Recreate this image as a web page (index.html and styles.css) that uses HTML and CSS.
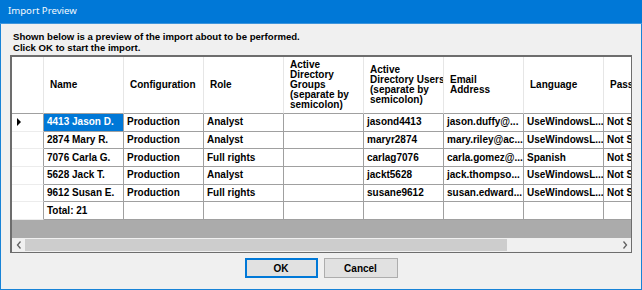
FILE: index.html
```html
<!DOCTYPE html>
<html>
<head>
<meta charset="utf-8">
<title>Import Preview</title>
<link rel="stylesheet" href="styles.css">
</head>
<body>
<div class="window">
  <div class="titlebar"><span class="title">Import Preview</span></div>
  <div class="content">
    <p class="intro">Shown below is a preview of the import about to be performed.<br>Click OK to start the import.</p>
    <div class="grid">
      <div class="grid-viewport">
        <table class="table">
          <colgroup>
            <col class="c-rowhead"><col class="c-col"><col class="c-col"><col class="c-col"><col class="c-col"><col class="c-col"><col class="c-col"><col class="c-col"><col class="c-col">
          </colgroup>
          <thead>
            <tr>
              <th class="rowhead"></th>
              <th>Name</th>
              <th>Configuration</th>
              <th>Role</th>
              <th>Active<br>Directory<br>Groups<br>(separate by<br>semicolon)</th>
              <th>Active<br>Directory Users<br>(separate by<br>semicolon)</th>
              <th>Email<br>Address</th>
              <th>Language</th>
              <th>Password</th>
            </tr>
          </thead>
          <tbody>
            <tr>
              <td class="rowhead"><svg class="current" width="5" height="8" viewBox="0 0 5 8"><path d="M0 0 L4 4 L0 8 Z" fill="#000"/></svg></td>
              <td class="selected">4413 Jason D.</td><td>Production</td><td>Analyst</td><td></td><td>jasond4413</td><td>jason.duffy@...</td><td>UseWindowsL...</td><td>Not Set</td>
            </tr>
            <tr>
              <td class="rowhead"></td>
              <td>2874 Mary R.</td><td>Production</td><td>Analyst</td><td></td><td>maryr2874</td><td>mary.riley@ac...</td><td>UseWindowsL...</td><td>Not Set</td>
            </tr>
            <tr>
              <td class="rowhead"></td>
              <td>7076 Carla G.</td><td>Production</td><td>Full rights</td><td></td><td>carlag7076</td><td>carla.gomez@...</td><td>Spanish</td><td>Not Set</td>
            </tr>
            <tr>
              <td class="rowhead"></td>
              <td>5628 Jack T.</td><td>Production</td><td>Analyst</td><td></td><td>jackt5628</td><td>jack.thompso...</td><td>UseWindowsL...</td><td>Not Set</td>
            </tr>
            <tr>
              <td class="rowhead"></td>
              <td>9612 Susan E.</td><td>Production</td><td>Full rights</td><td></td><td>susane9612</td><td>susan.edward...</td><td>UseWindowsL...</td><td>Not Set</td>
            </tr>
            <tr>
              <td class="rowhead"></td>
              <td>Total: 21</td><td></td><td></td><td></td><td></td><td></td><td></td><td></td>
            </tr>
          </tbody>
        </table>
        <div class="empty-area"></div>
      </div>
      <div class="hscroll">
        <div class="arrow"><svg width="6" height="8" viewBox="0 0 6 8"><path d="M4.5 0.5 L1.5 4 L4.5 7.5" fill="none" stroke="#606060" stroke-width="1.3"/></svg></div>
        <div class="track"><div class="thumb"></div></div>
        <div class="arrow"><svg width="6" height="8" viewBox="0 0 6 8"><path d="M1.5 0.5 L4.5 4 L1.5 7.5" fill="none" stroke="#606060" stroke-width="1.3"/></svg></div>
      </div>
    </div>
    <div class="buttons">
      <button class="btn btn-default">OK</button>
      <button class="btn btn-cancel">Cancel</button>
    </div>
  </div>
</div>
</body>
</html>
```
FILE: styles.css
```css
* { box-sizing: border-box; }
html, body {
  margin: 0;
  padding: 0;
  width: 642px;
  height: 290px;
  overflow: hidden;
  background: #f0f0f0;
}
.window {
  width: 642px;
  height: 290px;
  display: flex;
  flex-direction: column;
  border: 1px solid #1883d7;
  border-top: none;
  background: #f0f0f0;
}
.titlebar {
  height: 24px;
  flex: none;
  background: #0078d7;
  border-bottom: 1px solid #3e95dc;
  display: flex;
  align-items: center;
  padding-left: 8px;
  margin: 0 -1px;
}
.title {
  font-family: "Noto Sans", "Open Sans", sans-serif;
  font-size: 9.6px;
  color: #f4f9fd;
  line-height: 14px;
  position: relative;
  top: -1px;
}
.content {
  flex: 1;
  display: flex;
  flex-direction: column;
  padding: 7px 9px 0 9px;
  font-family: "Liberation Sans", Arial, sans-serif;
  font-weight: bold;
  font-size: 10px;
  color: #000;
}
.intro {
  margin: 0;
  font-size: 9.6px;
  line-height: 11px;
  padding-left: 3px;
}
.grid {
  margin-top: 2px;
  width: 622px;
  height: 198px;
  border: 1px solid #6d6d6d;
  border-top-width: 2px;
  border-left-width: 2px;
  display: flex;
  flex-direction: column;
  overflow: hidden;
}
.grid-viewport {
  flex: 1;
  overflow: hidden;
  background: #ababab;
}
.table {
  border-collapse: separate;
  border-spacing: 0;
  table-layout: fixed;
  width: 672px;
  background: #fff;
}
.c-rowhead { width: 32px; }
.c-col { width: 80px; }
.table th, .table td {
  border-right: 1px solid #a0a0a0;
  border-bottom: 1px solid #a0a0a0;
  white-space: nowrap;
  overflow: hidden;
  text-align: left;
  font-weight: bold;
  padding: 0;
}
.table th {
  height: 57px;
  padding-left: 6px;
  line-height: 10px;
  vertical-align: middle;
  border-right-color: #e6e6e6;
}
.table th.rowhead { border-right-color: #e6e6e6; }
.table td {
  height: 17.65px;
  padding-left: 3px;
  line-height: 16px;
  vertical-align: middle;
}
.table td.rowhead {
  border-bottom-color: #ececec;
  padding-left: 5px;
}
.current { display: block; }
.table td.selected {
  background: #0078d7;
  color: #fff;
}
.empty-area {
  height: 20px;
}
.hscroll {
  height: 14px;
  flex: none;
  display: flex;
  background: #f0f0f0;
}
.arrow {
  width: 13px;
  display: flex;
  align-items: center;
  justify-content: center;
}
.track {
  flex: 1;
  padding: 1px 0;
}
.thumb {
  width: 482px;
  height: 100%;
  background: #cdcdcd;
}
.buttons {
  display: flex;
  justify-content: center;
  gap: 6px;
  margin-top: 5px;
}
.btn {
  height: 20px;
  font-family: "Liberation Sans", Arial, sans-serif;
  font-weight: bold;
  font-size: 10px;
  color: #000;
  background: #e1e1e1;
  border: 1px solid #adadad;
  padding: 0;
}
.btn-default {
  width: 73px;
  border: 2px solid #0078d7;
}
.btn-cancel {
  width: 74px;
}
```
